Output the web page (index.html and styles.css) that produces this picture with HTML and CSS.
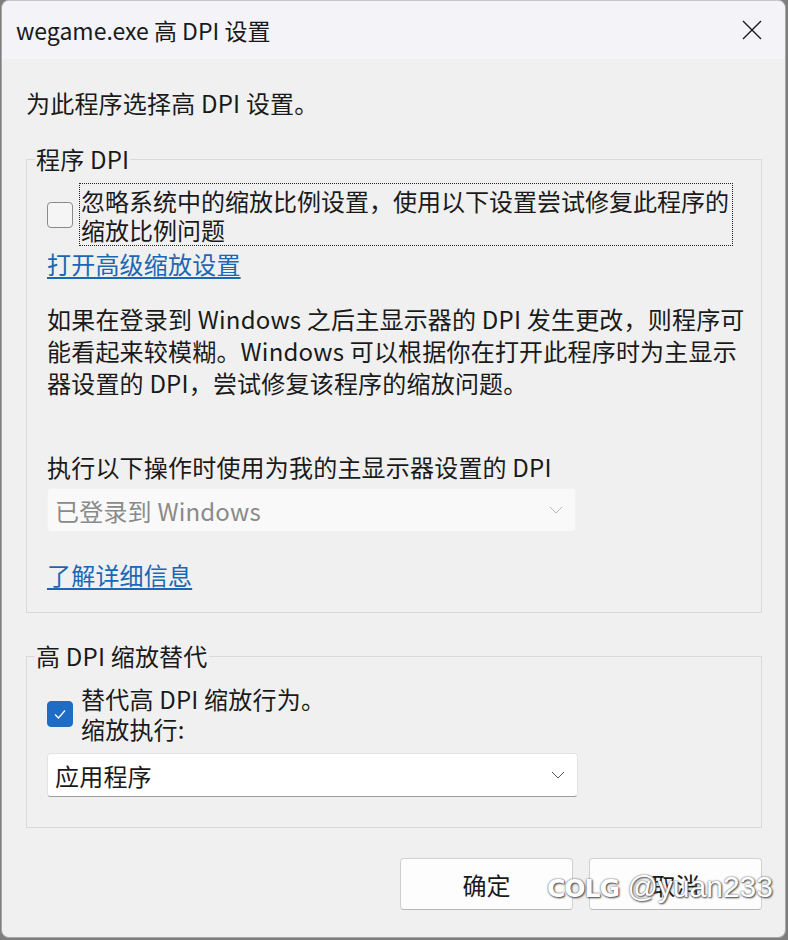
FILE: index.html
```html
<!DOCTYPE html>
<html>
<head>
    <title>wegame.exe 高 DPI 设置</title>
    <link rel="stylesheet" href="styles.css">
</head>
<body>
    <div class="window">
        <div class="titlebar">
            <span class="title">wegame.exe 高 DPI 设置</span>
            <svg class="close" width="20" height="20" viewBox="0 0 20 20">
                <path d="M1 1 L19 19 M19 1 L1 19" stroke="#1a1a1a" stroke-width="1.4" fill="none"/>
            </svg>
        </div>

        <div class="content">
            <p class="intro">为此程序选择高 DPI 设置。</p>

            <fieldset class="group">
                <legend>程序 DPI</legend>
                <div class="check-row">
                    <span class="box"></span>
                    <span class="check-label focused">忽略系统中的缩放比例设置，使用以下设置尝试修复此程序的<br>缩放比例问题</span>
                </div>
                <a class="link link-first" href="#">打开高级缩放设置</a>
                <p class="para">如果在登录到 Windows 之后主显示器的 DPI 发生更改，则程序可<br>能看起来较模糊。Windows 可以根据你在打开此程序时为主显示<br>器设置的 DPI，尝试修复该程序的缩放问题。</p>
                <p class="field-label">执行以下操作时使用为我的主显示器设置的 DPI</p>
                <div class="select disabled">
                    <span>已登录到 Windows</span>
                    <svg width="14" height="8" viewBox="0 0 14 8"><path d="M1 1 L7 7 L13 1" stroke="#b8b8b8" stroke-width="1" fill="none"/></svg>
                </div>
                <a class="link link-more" href="#">了解详细信息</a>
            </fieldset>

            <fieldset class="group group-two">
                <legend>高 DPI 缩放替代</legend>
                <div class="check-row">
                    <span class="box checked">
                        <svg width="14" height="12" viewBox="0 0 14 12"><path d="M2 6.5 L5.5 10 L12 2.5" stroke="#fff" stroke-width="1.3" fill="none"/></svg>
                    </span>
                    <span class="check-label">替代高 DPI 缩放行为。<br>缩放执行:</span>
                </div>
                <div class="select">
                    <span>应用程序</span>
                    <svg width="14" height="8" viewBox="0 0 14 8"><path d="M1 1 L7 7 L13 1" stroke="#555" stroke-width="1" fill="none"/></svg>
                </div>
            </fieldset>

            <div class="buttons">
                <button>确定</button>
                <button>取消</button>
            </div>
        </div>

        <div class="watermark"><span class="logo">COLG</span> @yuan233</div>
    </div>
</body>
</html>
```

FILE: styles.css
```css
body { margin: 0; background: #7e7e7e; font-family: "Noto Sans CJK SC", "Noto Sans", sans-serif; color: #1a1a1a; }
.window { position: relative; width: 783px; height: 936px; margin-left: 1px; background: #f0f0f0; border: 1px solid #a8a8a8; border-top-color: #c8c8c8; border-radius: 8px; overflow: hidden; }
.titlebar { height: 58px; background: #f3f3f8; display: flex; align-items: center; justify-content: space-between; padding: 0 23px 0 14px; }
.title { font-size: 23px; line-height: 32px; }
.close { display: block; }
.content { padding: 0 23px 0 24px; font-size: 24px; letter-spacing: 0.2px; }
.intro { margin: 28px 0 0 0; line-height: 32px; }
.group { margin: 24px 0 0 0; padding: 8px 20px 20px 20px; border: 1px solid #dadada; border-radius: 0; min-width: 0; }
.group legend { padding: 0 1px; margin-left: -12px; line-height: 32px; font-size: 24px; }
.group-two { margin-top: 27px; padding-top: 10px; padding-bottom: 30px; }
.check-row { display: flex; align-items: center; }
.box { width: 24px; height: 24px; border: 1px solid #8a8a8a; border-radius: 4px; background: #f5f5f5; flex: none; margin-right: 6px; display: flex; align-items: center; justify-content: center; }
.box.checked { background: #1f6cc4; border-color: #1f6cc4; }
.check-label { line-height: 29px; padding: 2px 3px 1px 1px; border: 1px dotted transparent; white-space: nowrap; letter-spacing: 0; }
.group-two .check-label { line-height: 30px; padding-top: 1px; letter-spacing: 0.2px; }
.check-label.focused { border-color: #222; }
.link { display: inline-block; color: #1a67b5; text-decoration: underline; text-underline-offset: 3px; line-height: 32px; }
.link-first { margin-top: 1px; }
.link-more { margin-top: 27px; }
.para { margin: 22px 0 0 0; line-height: 32px; white-space: nowrap; }
.field-label { margin: 52px 0 5px 0; line-height: 32px; }
.select { width: 529px; height: 42px; display: flex; align-items: center; justify-content: space-between; padding: 0 12px 0 7px; box-sizing: border-box; background: #fff; border: 1px solid #e2e2e2; border-bottom-color: #9c9c9c; border-radius: 4px; }
.select.disabled { background: #f9f9f9; border-color: #f2f2f2; color: #8a8a8a; height: 44px; }
.group-two .select { margin-top: 7px; height: 44px; width: 531px; }
.buttons { display: flex; justify-content: flex-end; gap: 16px; margin-top: 30px; }
button { width: 173px; height: 52px; background: #fdfdfd; border: 1px solid #d0d0d0; border-bottom-color: #b8b8b8; border-radius: 4px; font-family: inherit; font-size: 24px; color: #1a1a1a; }
.watermark { position: absolute; left: 545px; top: 869px; white-space: nowrap; font-family: "Liberation Sans", sans-serif; font-size: 30px; color: #fff; text-shadow: 0 0 2px #555, 1px 1px 2px #444; }
.watermark .logo { font-weight: bold; font-family: "DejaVu Sans", sans-serif; font-size: 25px; letter-spacing: -1px; }
```
